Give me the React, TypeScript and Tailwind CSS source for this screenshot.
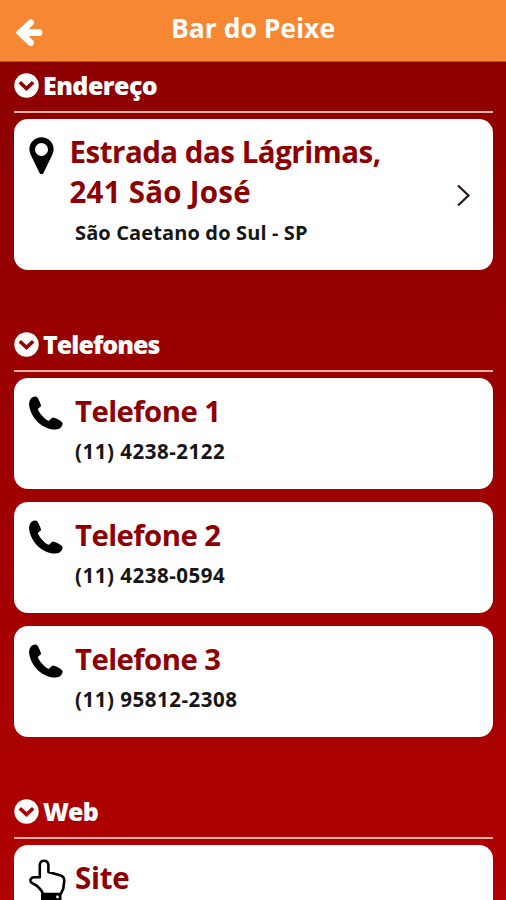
import React from "react";

const SANS = "font-['Open_Sans','Noto_Sans',sans-serif]";

function BackArrow() {
  return (
    <svg className="block h-[28px] w-[27px]" viewBox="0 0 27 28">
      <path
        fill="#fff"
        d="M.9 12.200L13 .9C14.200-.1 15.700 0 16.700 1L17.400 1.800C18.500 3 18.400 4.500 17.300 5.600L12.600 10.300H23.800C25.300 10.300 26.300 11.300 26.300 12.800V14.600C26.300 16.100 25.300 17.100 23.800 17.100H12.600L17.300 21.800C18.400 22.900 18.500 24.400 17.400 25.600L16.700 26.400C15.700 27.400 14.200 27.500 13 26.500L.9 15.200C-.1 14.300-.1 13.100.9 12.200Z"
      />
    </svg>
  );
}

function CircleChevron({ color }: { color: string }) {
  return (
    <svg className="block h-[25px] w-[25px] shrink-0" viewBox="0 0 25 25">
      <circle cx="12.5" cy="12.5" r="12.2" fill="#fff" />
      <path d="M5.800 9.300L12.500 15.600L19.200 9.300" fill="none" stroke={color} strokeWidth="3.600" />
    </svg>
  );
}

function Pin() {
  return (
    <svg className="block h-[38px] w-[25px]" viewBox="0 0 25 38">
      <path
        fillRule="evenodd"
        d="M12.5.2C5.8.2.4 5.500.4 12.100c0 2.600.7 4.500 1.900 7l8.200 16.800c.8 1.600 3.200 1.600 4 0l8.200-16.800c1.200-2.500 1.900-4.400 1.900-7C24.600 5.500 19.200.2 12.500.2zM12.500 6a6.500 6.500 0 1 1 0 13a6.500 6.500 0 0 1 0-13z"
      />
    </svg>
  );
}

function Phone() {
  return (
    <svg className="block h-[34px] w-[34px]" viewBox="0 0 34 34">
      <path d="M3 1.600C4.600.5 7 .1 8 1.100C9.600 3.300 11.200 6.800 12 9.600C12.200 11 9 11.800 8.900 13.200C9.400 16.200 15.600 23.200 19.300 24.700C20.800 25.200 22.400 21.600 24 21.600C27 22 31 24.400 33.200 26.200C34.500 28 32.500 31.600 30.200 32.700C24 35.400 13.300 31 7.900 25.200C3 19.700 0 12.800.1 7.700C.3 5 1.400 2.700 3 1.600Z" />
    </svg>
  );
}

function Hand() {
  return (
    <svg className="block h-[44px] w-[38px]" viewBox="0 0 38 44">
      <path
        d="M10.800 18.300V6.200C10.800.2 19.400.2 19.400 6.200V13L31 16.200C34.500 17.200 35.600 19.200 35.200 22.500L34.300 29.500L31.800 35H14.200C11.300 28.700 7.500 26 3.500 24.300C-.1 22.600 1.400 18.400 5 18.200Z"
        fill="#fff"
        stroke="#000"
        strokeWidth="2.600"
        strokeLinejoin="round"
      />
      <path d="M12 34.500H32.500V44H12Z" />
      <circle cx="28.500" cy="38" r="1.400" fill="#fff" />
    </svg>
  );
}

function Heading({ children, color, className }: { children: React.ReactNode; color: string; className: string }) {
  return (
    <div className="flex h-[40px] items-start border-b-2 border-[#efb2aa]">
      <CircleChevron color={color} />
      <h2 className={`ml-[4.500px] -mt-[5px] whitespace-nowrap text-[25px] font-extrabold leading-[34px] text-white ${className}`}>{children}</h2>
    </div>
  );
}

function PhoneCard({ title, phone }: { title: string; phone: string }) {
  return (
    <article className="flex h-[111px] rounded-[14px] bg-white pl-[15px] pt-[18px]">
      <Phone />
      <div className="ml-[12.500px] whitespace-nowrap">
        <h3 className="-mt-[5px] text-[29.300px] font-bold leading-[40px] tracking-[-0.550px] text-[#8e0000]">{title}</h3>
        <p className="text-[20.500px] font-bold leading-[40px] tracking-[0.520px] text-[#161616]">{phone}</p>
      </div>
    </article>
  );
}

export default function App() {
  return (
    <div className={`h-[900px] w-[506px] overflow-hidden bg-linear-to-b from-[#8b0000] to-[#b00000] ${SANS}`}>
      <header className="grid h-[62px] grid-cols-[60px_1fr_60px] border-b border-[#c85018] bg-[#f68733]">
        <div className="pl-[16px] pt-[19px]">
          <BackArrow />
        </div>
        <h1 className="whitespace-nowrap pt-[8px] text-center text-[26.500px] font-bold leading-[40px] text-white">Bar do Peixe</h1>
      </header>
      <main className="px-[13.500px] pt-[11px]">
        <section>
          <Heading color="#8d0000" className="tracking-[-0.550px]">Endereço</Heading>
          <article className="mt-[6px] flex h-[151px] items-start rounded-[14px] bg-white pl-[15px] pt-[18px]">
            <Pin />
            <div className="-mt-[5px] ml-[16px] flex-1 whitespace-nowrap">
              <h3 className="text-[29.500px] font-bold leading-[40px] text-[#8e0000]">
                <span className="block tracking-[-0.500px]">Estrada das Lágrimas,</span>
                <span className="block tracking-[0.250px]">241 São José</span>
              </h3>
              <p className="pl-[5.500px] text-[20px] font-bold leading-[42px] tracking-[0.130px] text-[#161616]">São Caetano do Sul - SP</p>
            </div>
            <svg className="mr-[22px] mt-[46px] h-[24px] w-[15px]" viewBox="0 0 15 24" fill="none" stroke="#281818" strokeWidth="2.200">
              <path d="M2 2.500L12.500 12.500L2 22.500" />
            </svg>
          </article>
        </section>
        <section className="mt-[62px]">
          <Heading color="#970000" className="tracking-[-0.950px]">Telefones</Heading>
          <div className="mt-[6px] flex flex-col gap-[13px]">
            <PhoneCard title="Telefone 1" phone="(11) 4238-2122" />
            <PhoneCard title="Telefone 2" phone="(11) 4238-0594" />
            <PhoneCard title="Telefone 3" phone="(11) 95812-2308" />
          </div>
        </section>
        <section className="mt-[62px]">
          <Heading color="#ac0000" className="tracking-[-0.900px]">Web</Heading>
          <article className="mt-[6px] flex h-[111px] rounded-[14px] bg-white pl-[15px] pt-[14px]">
            <Hand />
            <h3 className="-mt-px ml-[8.500px] text-[29.500px] font-bold leading-[40px] tracking-[-0.300px] text-[#8e0000]">Site</h3>
          </article>
        </section>
      </main>
    </div>
  );
}
